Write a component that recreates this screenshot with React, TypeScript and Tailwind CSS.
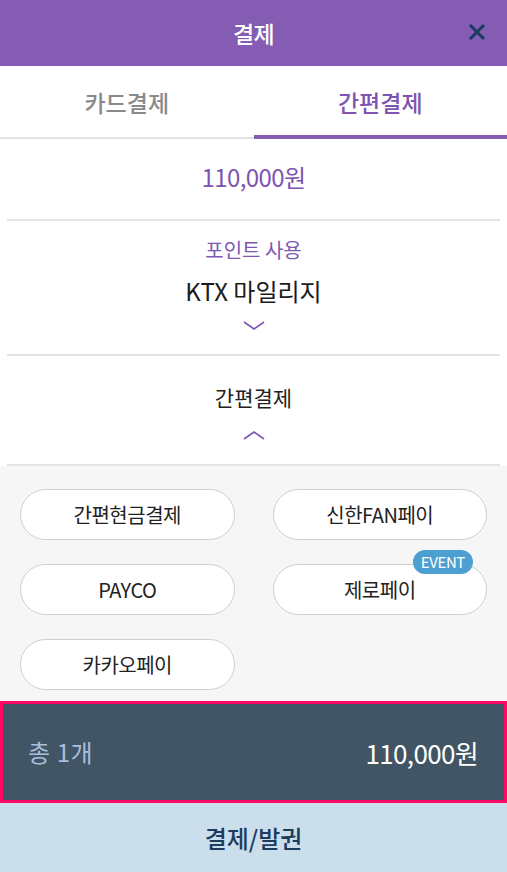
const FONT = "font-['Noto_Sans_CJK_KR','Noto_Sans',sans-serif]"

const METHODS = [
  { label: '간편현금결제' },
  { label: '신한FAN페이' },
  { label: 'PAYCO' },
  { label: '제로페이', event: true },
  { label: '카카오페이' },
]

function Chevron({ up }: { up?: boolean }) {
  return (
    <svg width="22" height="10" viewBox="0 0 22 10">
      <path d={up ? 'M1 9 L11 2 L21 9' : 'M1 1 L11 8 L21 1'} fill="none" stroke="#7f57b2" strokeWidth="1.6" />
    </svg>
  )
}

export default function App() {
  return (
    <div className={`${FONT} w-[507px] h-[872px] flex flex-col bg-white overflow-hidden`}>
      {/* 헤더 */}
      <div className="relative h-[66px] bg-[#845cb3] flex items-center justify-center">
        <span className="text-white text-[23px] font-medium tracking-tight">결제</span>
        <button className="absolute right-[17px] top-[19px] w-[26px] h-[26px] flex items-center justify-center">
          <svg width="20" height="20" viewBox="0 0 20 20">
            <path d="M3 3 L17 17 M17 3 L3 17" stroke="#173c5d" strokeWidth="3" />
          </svg>
        </button>
      </div>

      {/* 탭 */}
      <div className="flex h-[73px]">
        <div className="flex-1 flex items-center justify-center border-b-2 border-[#e2e2e2] text-[#8a8a8a] text-[23px] font-medium pt-[2px]">카드결제</div>
        <div className="flex-1 flex items-center justify-center border-b-[4px] border-[#845cb3] text-[#7d55b1] text-[23px] font-medium pt-[4px]">간편결제</div>
      </div>

      {/* 금액 */}
      <div className="mx-[7px] h-[82px] flex items-center justify-center border-b-2 border-[#e4e3e8]">
        <span className="text-[#7d55b1] text-[24px] tracking-tight leading-[30px] mb-[4px]">110,000원</span>
      </div>

      {/* 포인트 사용 */}
      <div className="mx-[7px] h-[135px] flex flex-col items-center border-b-2 border-[#e4e3e8] pt-[17px]">
        <span className="text-[#8058b3] text-[20px] leading-[24px]">포인트 사용</span>
        <span className="text-[#1b1b1b] text-[24px] leading-[30px] mt-[14px]">KTX 마일리지</span>
        <div className="mt-[15px]"><Chevron /></div>
      </div>

      {/* 간편결제 */}
      <div className="mx-[7px] h-[110px] flex flex-col items-center border-b-2 border-[#e4e3e8] pt-[28px]">
        <span className="text-[#222] text-[21px] leading-[26px]">간편결제</span>
        <div className="mt-[20px]"><Chevron up /></div>
      </div>

      {/* 결제수단 목록 */}
      <div className="bg-[#f6f6f6] flex-1 px-[20px] pt-[23px]">
        <div className="grid grid-cols-2 gap-x-[38px] gap-y-[24px]">
          {METHODS.map(m => (
            <div key={m.label} className="relative">
              <div className="h-[51px] rounded-full bg-white border border-[#cfcfcf] flex items-center justify-center text-[#222] text-[20px] tracking-tight">
                {m.label}
              </div>
              {m.event && (
                <span className="absolute right-[14px] top-[-14px] h-[24px] px-[8px] rounded-full bg-[#4e9fd1] text-white text-[15px] leading-[24px] tracking-tight">EVENT</span>
              )}
            </div>
          ))}
        </div>
      </div>

      {/* 합계 */}
      <div className="h-[102px] bg-[#415564] border-[3px] border-[#ff0a63] flex items-center justify-between pl-[25px] pr-[26px]">
        <span className="text-[#a9bfdf] text-[24px] tracking-wide">총 1개</span>
        <span className="text-white text-[26px] tracking-tight">110,000원</span>
      </div>

      {/* 결제 버튼 */}
      <button className="h-[69px] bg-[#cadeec] text-[#1c3c5e] text-[24px] font-medium flex items-center justify-center">결제/발권</button>
    </div>
  )
}
